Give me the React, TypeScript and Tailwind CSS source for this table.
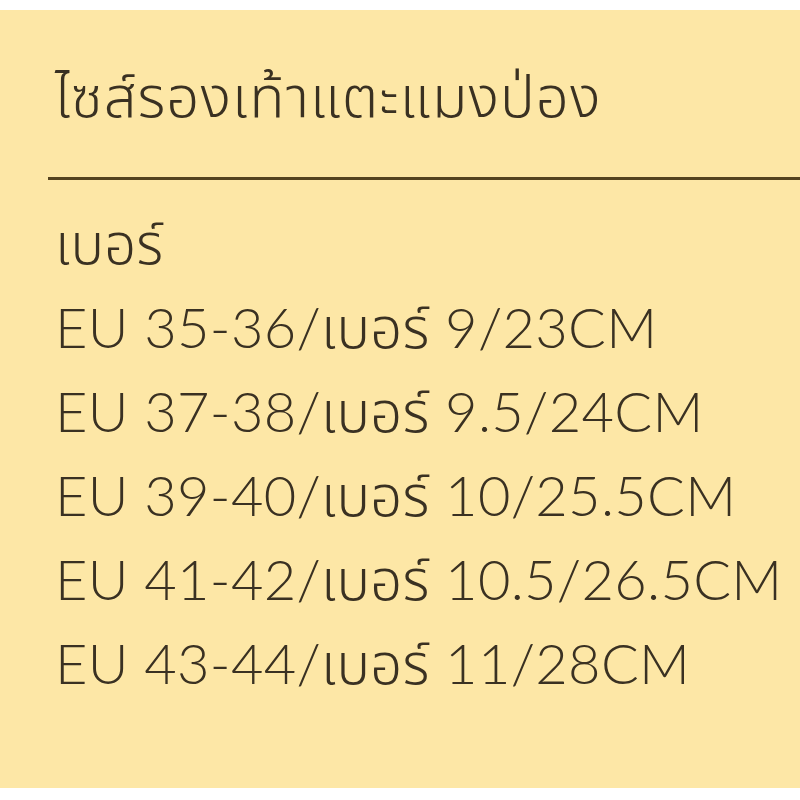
import React from 'react';

const rows = [
  'EU 35-36/เบอร์ 9/23CM',
  'EU 37-38/เบอร์ 9.5/24CM',
  'EU 39-40/เบอร์ 10/25.5CM',
  'EU 41-42/เบอร์ 10.5/26.5CM',
  'EU 43-44/เบอร์ 11/28CM',
];

export default function App() {
  return (
    <div className="w-[800px] h-[800px] bg-white pt-[10px] pb-[12px]" style={{ fontFamily: 'Lato, "Noto Sans Thai", "Noto Sans", sans-serif' }}>
      <div className="h-full bg-[#fde7a6] text-[#3a3122] font-light flex flex-col overflow-hidden">
        <div className="shrink-0 h-[167px] pt-[55px] pl-[55px] text-[58px] leading-[60px] tracking-[1px] whitespace-nowrap">ไซส์รองเท้าแตะแมงป่อง</div>
        <div className="shrink-0 ml-[48px] h-[3px] bg-[#54431f]" />
        <div className="shrink-0 pl-[55px] pt-[31px] text-[56px] leading-[84px] tracking-[0.3px] whitespace-nowrap">
          <div className="leading-[64px] mb-[10px]">เบอร์</div>
          {rows.map(r => (
            <div key={r}>{r}</div>
          ))}
        </div>
      </div>
    </div>
  );
}
